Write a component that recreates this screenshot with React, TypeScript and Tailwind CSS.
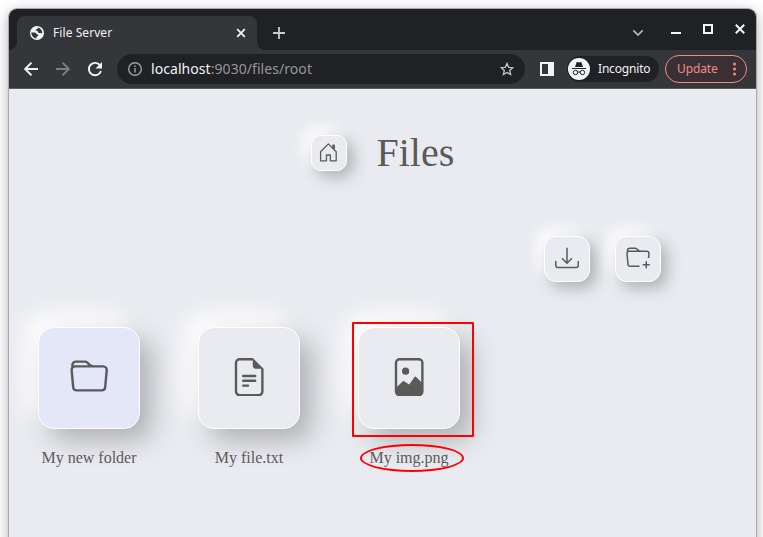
import React from "react";

const NEW_FOLDER =
  "M.54 3.87.5 3a2 2 0 0 1 2-2h3.672a2 2 0 0 1 1.414.586l.828.828A2 2 0 0 0 9.828 3h3.982a2 2 0 0 1 1.992 2.181l-.637 7A2 2 0 0 1 13.174 14H2.826a2 2 0 0 1-1.991-1.819l-.637-7a1.99 1.99 0 0 1 .342-1.31zM2.19 4a1 1 0 0 0-.996 1.09l.637 7a1 1 0 0 0 .995.91h10.348a1 1 0 0 0 .995-.91l.637-7A1 1 0 0 0 13.81 4H2.19zm4.69-1.707A1 1 0 0 0 6.172 2H2.5a1 1 0 0 0-1 .981l.006.139C1.72 3.042 1.95 3 2.19 3h5.396l-.707-.707z";
const TEXT_FILE =
  "M4 0h5.5v1H4a1 1 0 0 0-1 1v12a1 1 0 0 0 1 1h8a1 1 0 0 0 1-1V4.5h1V14a2 2 0 0 1-2 2H4a2 2 0 0 1-2-2V2a2 2 0 0 1 2-2zM9.5 3V0L14 4.5h-3A1.5 1.5 0 0 1 9.5 3zM5 11.5a.5.5 0 0 1 .5-.5h2a.5.5 0 0 1 0 1h-2a.5.5 0 0 1-.5-.5zm0-2a.5.5 0 0 1 .5-.5h5a.5.5 0 0 1 0 1h-5a.5.5 0 0 1-.5-.5zm0-2a.5.5 0 0 1 .5-.5h5a.5.5 0 0 1 0 1h-5a.5.5 0 0 1-.5-.5z";
const IMAGE_FILE =
  "M8.002 5.5a1.5 1.5 0 1 1-3 0 1.5 1.5 0 0 1 3 0zM12 0H4a2 2 0 0 0-2 2v12a2 2 0 0 0 2 2h8a2 2 0 0 0 2-2V2a2 2 0 0 0-2-2zM3 2a1 1 0 0 1 1-1h8a1 1 0 0 1 1 1v8l-2.083-2.083a.5.5 0 0 0-.76.063L8 11 5.835 9.7a.5.5 0 0 0-.611.076L3 12V2z";
const HOUSE =
  "M8.354 1.146a.5.5 0 0 0-.708 0l-6 6A.5.5 0 0 0 1.5 7.5v7a.5.5 0 0 0 .5.5h4.5a.5.5 0 0 0 .5-.5v-4h2v4a.5.5 0 0 0 .5.5H14a.5.5 0 0 0 .5-.5v-7a.5.5 0 0 0-.146-.354L13 5.793V2.5a.5.5 0 0 0-.5-.5h-1a.5.5 0 0 0-.5.5v1.293L8.354 1.146zM2.5 14V7.707l5.5-5.5 5.5 5.5V14H10v-4a.5.5 0 0 0-.5-.5h-3a.5.5 0 0 0-.5.5v4H2.5z";
const DOWNLOAD =
  "M.5 9.9a.5.5 0 0 1 .5.5v2.5a1 1 0 0 0 1 1h12a1 1 0 0 0 1-1v-2.5a.5.5 0 0 1 1 0v2.5a2 2 0 0 1-2 2H2a2 2 0 0 1-2-2v-2.5a.5.5 0 0 1 .5-.5zM7.646 11.854a.5.5 0 0 0 .708 0l3-3a.5.5 0 0 0-.708-.708L8.5 10.293V1.5a.5.5 0 0 0-1 0v8.793L5.354 8.146a.5.5 0 1 0-.708.708l3 3z";
const FOLDER_PLUS =
  "m.5 3 .04.87a1.99 1.99 0 0 0-.342 1.311l.637 7A2 2 0 0 0 2.826 14H9v-1H2.826a1 1 0 0 1-.995-.91l-.637-7A1 1 0 0 1 2.19 4h11.62a1 1 0 0 1 .996 1.09L14.54 8h1.005l.256-2.819A2 2 0 0 0 13.81 3H9.828a2 2 0 0 1-1.414-.586l-.828-.828A2 2 0 0 0 6.172 1H2.5a2 2 0 0 0-2 2zm5.672-1a1 1 0 0 1 .707.293L7.586 3H2.19c-.24 0-.47.042-.683.12L1.5 2.98a1 1 0 0 1 1-.98h3.672zM13.5 10a.5.5 0 0 1 .5.5V12h1.5a.5.5 0 1 1 0 1H14v1.5a.5.5 0 1 1-1 0V13h-1.5a.5.5 0 0 1 0-1H13v-1.5a.5.5 0 0 1 .5-.5z";

function Glyph({ d, className }: { d: string; className: string }) {
  return (
    <svg viewBox="0 0 16 16" className={className} fill="currentColor" fillRule="nonzero">
      <path d={d} />
    </svg>
  );
}

function TitleBar() {
  return (
    <div className="flex h-[41px] items-end bg-[#202124]">
      <svg className="h-2 w-2" viewBox="0 0 8 8"><path d="M8 0v8H0a8 8 0 0 0 8-8" fill="#35363a" /></svg>
      <div className="flex h-[34px] w-[240px] items-center rounded-t-lg bg-[#35363a] pl-[13px] pr-[11px]">
        <svg className="h-[14px] w-[14px]" viewBox="0 0 14 14">
          <circle cx="7" cy="7" r="7" fill="#f1f3f4" />
          <path d="M1.3 6.5h3.400c1.700 0 1.400 2 2.900 2 1 0 1.100 1 .2 1.400-.9.4-1.400.7-1.400 2.500C3 12 1.200 9.300 1.300 6.500M7.800 1.500v.8c0 .9-.7 1-1.600 1-.5 0-.5.8-.2 1.200.5.5 1.400.2 1.700.8.5.8.1 1.700 1.200 1.700h2.300c.6 0 .9.7.9 1.300A5.600 5.600 0 0 0 7.800 1.500" fill="#35363a" />
        </svg>
        <span className="ml-[9px] flex-1 text-[12px] leading-4 tracking-[0.07px] text-[#f1f3f4]">File Server</span>
        <svg className="h-[10px] w-[10px]" viewBox="0 0 10 10"><path d="M1.2 1.2l7.6 7.6m0-7.6L1.2 8.8" stroke="#f1f3f4" strokeWidth="1.8" /></svg>
      </div>
      <svg className="h-2 w-2" viewBox="0 0 8 8"><path d="M0 0v8h8a8 8 0 0 1-8-8" fill="#35363a" /></svg>
      <svg className="mb-[11px] ml-2 h-3 w-3" viewBox="0 0 12 12"><path d="M6 0v12M0 6h12" stroke="#c8cacc" strokeWidth="1.8" /></svg>
      <div className="flex h-full flex-1 items-start justify-end pr-[11px]">
        <svg className="mt-[20px] h-[8px] w-[12px]" viewBox="0 0 12 8"><path d="M1.3 1.3L6 6l4.700-4.700" fill="none" stroke="#b5b7b9" strokeWidth="1.7" /></svg>
        <div className="ml-[27px] mt-[23px] h-[2px] w-[10px] bg-[#f1f3f4]" />
        <div className="ml-[22px] mt-[15px] h-[10px] w-[10px] border-2 border-[#f1f3f4]" />
        <svg className="ml-[22px] mt-[15px] h-[10px] w-[10px]" viewBox="0 0 10 10"><path d="M.8.8l8.400 8.400m0-8.400L.8 9.200" stroke="#f1f3f4" strokeWidth="2" /></svg>
      </div>
    </div>
  );
}

function Toolbar() {
  return (
    <div className="flex h-[39px] items-center border-b border-[#5b5c60] bg-[#35363a] pl-[15px] pr-[9px]">
      <svg className="h-[14px] w-[14px]" viewBox="0 0 14 14"><path d="M14 7H1.500M7.500 .7L1.200 7l6.300 6.300" fill="none" stroke="#f1f3f4" strokeWidth="1.9" /></svg>
      <svg className="ml-[18px] h-[14px] w-[14px]" viewBox="0 0 14 14"><path d="M0 7h12.500M6.500 .7L12.800 7l-6.300 6.300" fill="none" stroke="#7d7e81" strokeWidth="1.9" /></svg>
      <svg className="ml-[17px] h-4 w-4" viewBox="0 0 16 16">
        <path d="M13.300 4.700A6.200 6.200 0 1 0 14 10" fill="none" stroke="#f1f3f4" strokeWidth="1.900" />
        <path d="M15 1v6.500H8.500z" fill="#f1f3f4" />
      </svg>
      <div className="ml-[14px] flex h-[30px] w-[408px] items-center rounded-full bg-[#202124] pl-[11px] pr-[11px]">
        <svg className="h-[14px] w-[14px]" viewBox="0 0 14 14"><circle cx="7" cy="7" r="6.300" fill="none" stroke="#9aa0a6" strokeWidth="1.400" /><path d="M7 6v4.500M7 3.500v1.500" stroke="#9aa0a6" strokeWidth="1.500" /></svg>
        <span className="ml-[9px] flex-1 text-[14px] leading-5 tracking-[0.06px] text-[#96989b]"><span className="text-[#f1f3f4]">localhost</span>:9030/files/root</span>
        <svg className="h-[14px] w-[14px]" viewBox="0 0 14 14"><path d="M7 1.500l1.700 3.800 4.100.4-3.100 2.700.9 4.100L7 10.400l-3.600 2.100.9-4.100L1.200 5.700l4.100-.4z" fill="none" stroke="#c4c6c8" strokeWidth="1.300" /></svg>
      </div>
      <div className="ml-[15px] h-[14px] w-[14px] border-2 border-r-[6px] border-[#f1f3f4]" />
      <div className="ml-[13px] flex h-[26px] w-[92px] items-center rounded-full bg-[#202124] pl-px">
        <svg className="h-[22px] w-[22px]" viewBox="0 0 22 22">
          <circle cx="11" cy="11" r="11" fill="#f1f3f4" />
          <path d="M7 9l1.500-4.500q.2-.6.800-.4L11 4.600l1.700-.5q.6-.2.8.4L15 9zM4 10h14v1H4z" fill="#202124" />
          <g fill="none" stroke="#202124" strokeWidth="1"><circle cx="7.500" cy="14.500" r="2.200" /><circle cx="14.500" cy="14.500" r="2.200" /><path d="M9.700 14.200q1.300-.6 2.600 0" /></g>
        </svg>
        <span className="ml-[8px] text-[12px] leading-4 tracking-[-0.18px] text-[#f1f3f4]">Incognito</span>
      </div>
      <div className="ml-[6px] flex h-7 w-[82px] items-center rounded-full border border-[#f28b82] bg-[#3a3034] pl-[11px] pr-[10px]">
        <span className="flex-1 text-[12px] leading-4 tracking-[-0.1px] text-[#f28b82]">Update</span>
        <svg className="h-[14px] w-[3px]" viewBox="0 0 3 14" fill="#f28b82"><circle cx="1.500" cy="2" r="1.500" /><circle cx="1.500" cy="7" r="1.500" /><circle cx="1.500" cy="12" r="1.500" /></svg>
      </div>
    </div>
  );
}

const files = [
  { name: "My new folder", icon: NEW_FOLDER, tile: "bg-[#e4e7f8]", marked: false },
  { name: "My file.txt", icon: TEXT_FILE, tile: "bg-[#eaebf0]", marked: false },
  { name: "My img.png", icon: IMAGE_FILE, tile: "bg-[#eaebf0]", marked: true },
];

const smallButton =
  "flex items-center justify-center border border-white bg-[#eaebf0] shadow-[6px_6px_15px_#aeafb3,-7px_-7px_14px_#fff]";

export default function App() {
  return (
    <div className="h-[537px] w-[763px] overflow-hidden bg-white pl-[9px] pt-[9px] font-['Noto_Sans',sans-serif]">
      <div className="h-[560px] w-[747px] rounded-t-lg shadow-[0_0_0_1px_#a9a9a9,0_3px_14px_rgba(0,0,0,0.35)]">
        <div className="h-full overflow-hidden rounded-t-lg bg-[#eaebf0]">
          <TitleBar />
          <Toolbar />
          <main className="font-['Liberation_Serif',serif] text-[#5a5a5a]">
            <header className="flex h-[128px] items-center pl-[302px]">
              <button className={`${smallButton} h-9 w-9 rounded-[10px]`}><Glyph d={HOUSE} className="mb-[2px] mr-px h-[20.8px] w-[20.8px]" /></button>
              <h1 className="ml-[29.5px] text-[40px] leading-[46px]">Files</h1>
            </header>
            <div className="flex gap-[25px] pl-[535px] pt-[19px]">
              <button className={`${smallButton} h-[46px] w-[46px] rounded-[12px]`}><Glyph d={DOWNLOAD} className="mb-[2px] h-6 w-6" /></button>
              <button className={`${smallButton} h-[46px] w-[46px] rounded-[12px]`}><Glyph d={FOLDER_PLUS} className="mb-[2px] h-6 w-6" /></button>
            </div>
            <div className="flex gap-[58px] pl-[29px] pt-[45px]">
              {files.map((f) => (
                <div key={f.name} className="relative flex w-[102px] flex-col items-center">
                  <div className={`${f.tile} flex h-[102px] w-[102px] items-center justify-center rounded-[16px] border border-white shadow-[12px_12px_26px_#b0b1b5,-13px_-13px_24px_#fff]`}>
                    <Glyph d={f.icon} className="mb-[2px] h-[38.4px] w-[38.4px]" />
                  </div>
                  <span className="mt-[20px] whitespace-nowrap text-[16px] leading-[18px]">{f.name}</span>
                  {f.marked && (
                    <>
                      <div className="absolute left-[-6px] top-[-5px] h-[115px] w-[122px] rounded-[1px] border-2 border-[#ff0000]" />
                      <div className="absolute left-[2px] top-[117px] h-[28px] w-[104px] rounded-[50%] border-2 border-[#ff0000]" />
                    </>
                  )}
                </div>
              ))}
            </div>
          </main>
        </div>
      </div>
    </div>
  );
}
